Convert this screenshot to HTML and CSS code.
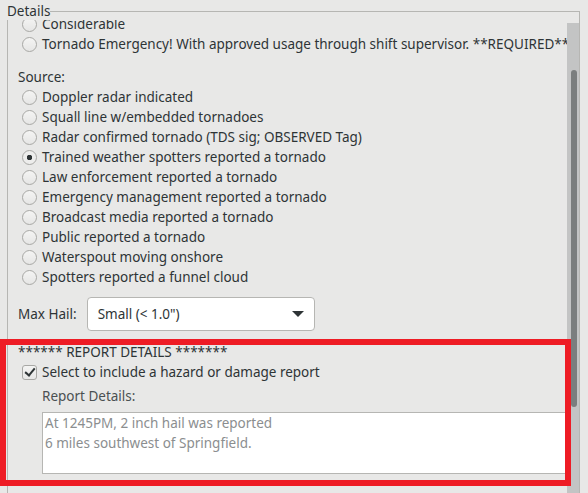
FILE: index.html
```html
<!DOCTYPE html>
<html lang="en">
<head>
    <meta charset="UTF-8">
    <title>Details</title>
    <link rel="stylesheet" href="styles.css">
</head>
<body>

<fieldset class="details">
    <legend>Details</legend>
    <div class="scroller">
        <div class="viewport">
            <div class="content">
                <label class="row"><input type="radio" name="threat"> Considerable</label>
                <label class="row"><input type="radio" name="threat"> Tornado Emergency! With approved usage through shift supervisor. **REQUIRED**</label>

                <div class="row heading">Source:</div>
                <label class="row"><input type="radio" name="source"> Doppler radar indicated</label>
                <label class="row"><input type="radio" name="source"> Squall line w/embedded tornadoes</label>
                <label class="row"><input type="radio" name="source"> Radar confirmed tornado (TDS sig; OBSERVED Tag)</label>
                <label class="row"><input type="radio" name="source" checked> Trained weather spotters reported a tornado</label>
                <label class="row"><input type="radio" name="source"> Law enforcement reported a tornado</label>
                <label class="row"><input type="radio" name="source"> Emergency management reported a tornado</label>
                <label class="row"><input type="radio" name="source"> Broadcast media reported a tornado</label>
                <label class="row"><input type="radio" name="source"> Public reported a tornado</label>
                <label class="row"><input type="radio" name="source"> Waterspout moving onshore</label>
                <label class="row"><input type="radio" name="source"> Spotters reported a funnel cloud</label>

                <div class="hail">
                    <span>Max Hail:</span>
                    <div class="combo">
                        <span>Small (&lt; 1.0")</span>
                        <span class="arrow"></span>
                    </div>
                </div>

                <div class="report">
                    <div class="row heading">****** REPORT DETAILS *******</div>
                    <label class="row"><input type="checkbox" checked> Select to include a hazard or damage report</label>
                    <div class="sub-label">Report Details:</div>
                    <div class="textarea">At 1245PM, 2 inch hail was reported<br>6 miles southwest of Springfield.</div>
                </div>
            </div>
        </div>
        <div class="trough"><div class="slider"></div></div>
    </div>
</fieldset>

<div class="highlight"></div>

</body>
</html>
```

FILE: styles.css
```css
body {
    margin: 0;
    height: 493px;
    overflow: hidden;
    background: #e8e8e7;
    color: #2e3436;
    font-family: "Noto Sans", sans-serif;
    font-size: 13.5px;
    position: relative;
}

.details {
    margin: 2px 8px 0 7px;
    padding: 0;
    min-width: 0;
    border: 1px solid #b6b6b3;
    height: 600px;
}
.details legend {
    padding: 0;
    margin-left: -1px;
    line-height: 18px;
}

.scroller {
    display: flex;
}
.viewport {
    flex: 1;
    min-width: 0;
    height: 480px;
    overflow: hidden;
}
.content {
    margin-top: -6px;
    padding-left: 14px;
}

.row {
    display: flex;
    align-items: center;
    height: 20px;
    white-space: nowrap;
}
.row input {
    margin: 0 5px 0 0;
}
.content > .heading {
    margin-top: 13px;
    margin-left: -4px;
}

input[type="radio"] {
    appearance: none;
    width: 15px;
    height: 15px;
    border: 1px solid #a8a8a5;
    border-radius: 50%;
    background: linear-gradient(#f4f4f3, #e6e6e5);
    box-sizing: border-box;
    flex: none;
}
input[type="radio"]:checked {
    background: radial-gradient(circle, #2e3436 0, #2e3436 2.5px, #ededec 3px);
}
input[type="checkbox"] {
    appearance: none;
    width: 15px;
    height: 15px;
    border: 1px solid #a8a8a5;
    border-radius: 3px;
    background: linear-gradient(#f4f4f3, #e6e6e5);
    box-sizing: border-box;
    flex: none;
    position: relative;
}
input[type="checkbox"]:checked::after {
    content: "";
    position: absolute;
    left: 4px;
    top: 0px;
    width: 4px;
    height: 8px;
    border: solid #2e3436;
    border-width: 0 2.5px 2.5px 0;
    transform: rotate(40deg);
}

.hail {
    display: flex;
    align-items: center;
    gap: 10px;
    margin: 10px 0 0 -4px;
}
.combo {
    width: 228px;
    height: 34px;
    box-sizing: border-box;
    background: #fff;
    border: 1px solid #b6b6b3;
    border-radius: 4px;
    display: flex;
    align-items: center;
    justify-content: space-between;
    padding: 0 10px;
}
.arrow {
    width: 0;
    height: 0;
    border-left: 6px solid transparent;
    border-right: 6px solid transparent;
    border-top: 6px solid #2e3436;
}

.report {
    margin-top: 11px;
}
.report > .heading {
    margin-left: -4px;
}
.sub-label {
    margin: 4px 0 0 20px;
    line-height: 20px;
    color: #4b5052;
}
.textarea {
    margin: 6px 0 0 20px;
    height: 62px;
    box-sizing: border-box;
    background: #fff;
    border: 1px solid #b6b6b3;
    border-right: none;
    padding: 0 2px;
    line-height: 20px;
    color: #8b8e8f;
}

.trough {
    flex: none;
    width: 12px;
    margin-top: 3px;
    height: 480px;
    background: #c3c4c4;
    position: relative;
}
.slider {
    position: absolute;
    left: 4px;
    top: 47px;
    width: 6px;
    height: 337px;
    border-radius: 3px;
    background: #7b7e7e;
}

.highlight {
    position: absolute;
    left: 0;
    top: 339px;
    width: 559px;
    height: 135px;
    border: 6px solid #ee1c25;
}
```
